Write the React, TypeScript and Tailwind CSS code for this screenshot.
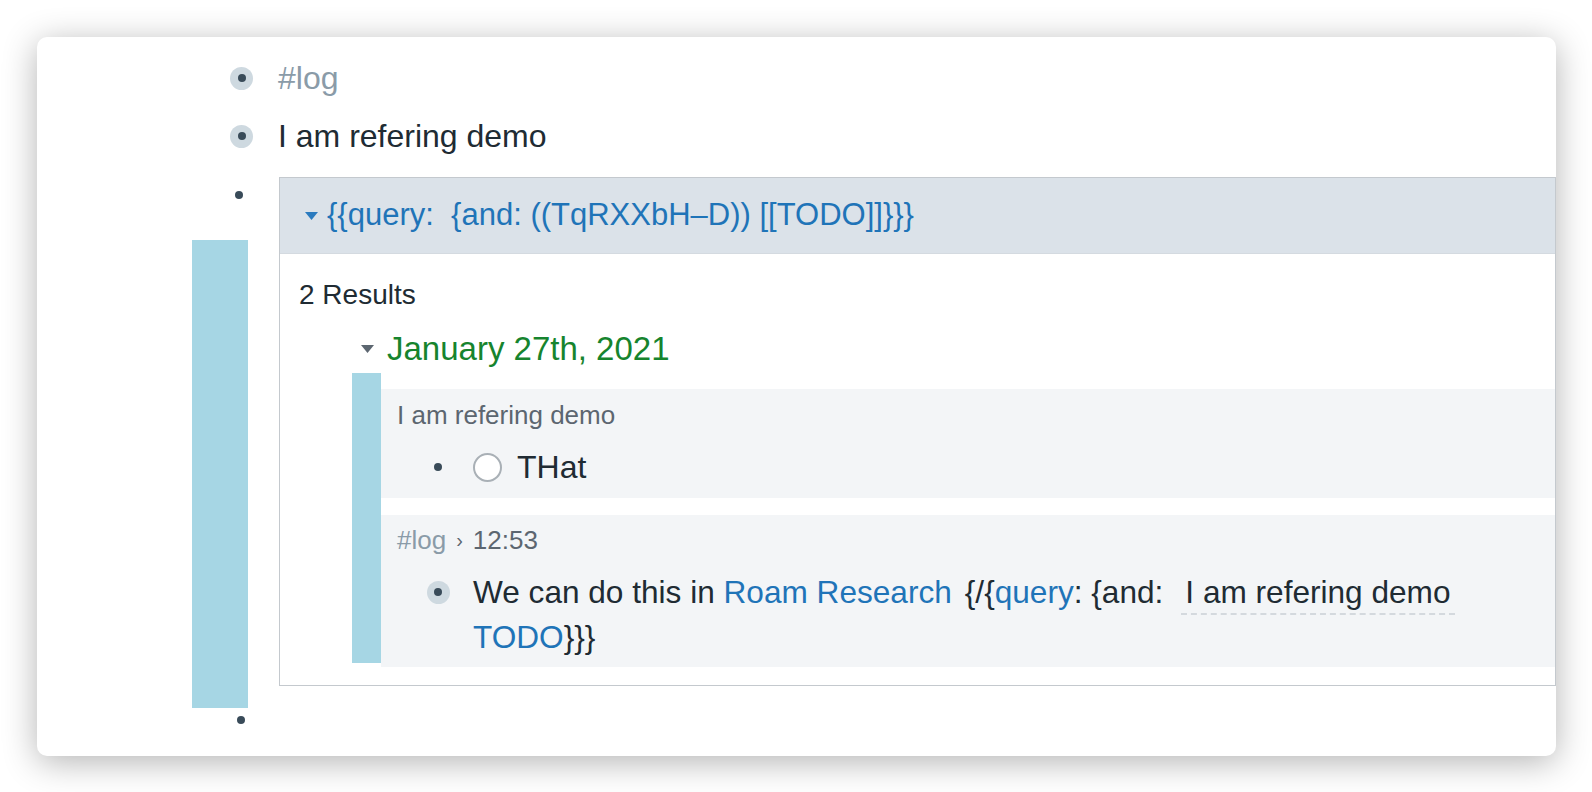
const font = { fontFamily: '"Liberation Sans", Arial, sans-serif' };

function Halo() {
  return (
    <div className="flex h-[23px] w-[23px] items-center justify-center rounded-full bg-[#ced9e0]">
      <div className="h-[8px] w-[8px] rounded-full bg-[#394b59]" />
    </div>
  );
}

function Dot() {
  return <div className="h-[8px] w-[8px] rounded-full bg-[#394b59]" />;
}

function Caret({ color }: { color: string }) {
  return (
    <svg width="13" height="8" viewBox="0 0 13 8" className="shrink-0">
      <path d="M0 0 L13 0 L6.5 8 Z" fill={color} />
    </svg>
  );
}

export default function App() {
  return (
    <div className="h-[792px] w-[1592px] overflow-hidden bg-white pl-[37px] pt-[37px]" style={font}>
      <div className="h-[719px] w-[1519px] overflow-hidden rounded-[10px] bg-white pl-[155px] pt-[12px] shadow-[0_6px_34px_rgba(0,0,0,0.3)]">
        {/* #log */}
        <div className="flex h-[58px] items-center">
          <div className="flex w-[62px] justify-end pr-[1px]">
            <Halo />
          </div>
          <div className="ml-[24px] text-[32px] text-[#8a9ba8]">#log</div>
        </div>

        {/* I am refering demo */}
        <div className="flex h-[58px] items-center">
          <div className="flex w-[62px] justify-end pr-[1px]">
            <Halo />
          </div>
          <div className="ml-[24px] text-[32px] text-[#202b33]">I am refering demo</div>
        </div>

        {/* query block */}
        <div className="mt-[12px] flex items-start">
          <div className="flex w-[62px] flex-col">
            <div className="flex h-[36px] items-center justify-end pr-[9px]">
              <Dot />
            </div>
            <div className="mt-[27px] h-[468px] w-[56px] bg-[#a6d6e4]" />
          </div>

          <div className="ml-[27px] w-[1320px] border border-[#c4c9ce]">
            <div className="flex h-[76px] items-center gap-[9px] border-b border-[#d4dae0] bg-[#dbe2e9] pl-[25px]">
              <Caret color="#2b7bbf" />
              <span className="whitespace-pre text-[31px] text-[#1f74b8]">
                {'{{query:  {and: ((TqRXXbH–D)) [[TODO]]}}}'}
              </span>
            </div>

            <div className="pl-[19px] pt-[22px]">
              <div className="flex h-[36px] items-center pt-[2px] text-[28px] text-[#202b33]">2 Results</div>

              <div className="mt-[17px] flex h-[40px] items-center gap-[13px] pl-[62px]">
                <Caret color="#5c6670" />
                <span className="text-[33px] text-[#16842e]">January 27th, 2021</span>
              </div>

              <div className="mt-[4px] flex pl-[53px] pb-[18px]">
                <div className="h-[290px] w-[29px] shrink-0 bg-[#a6d6e4]" />
                <div className="flex flex-1 flex-col gap-[17px] pt-[16px]">
                  {/* result 1 */}
                  <div className="h-[109px] bg-[#f3f5f7] pl-[16px] pt-[10px]">
                    <div className="flex h-[32px] items-center text-[26px] text-[#5c6670]">I am refering demo</div>
                    <div className="mt-[14px] flex h-[44px] items-center">
                      <div className="flex w-[82px] justify-center pl-[1px]">
                        <Dot />
                      </div>
                      <div className="ml-[-6px] h-[29px] w-[29px] rounded-full border-2 border-[#a9b0b6] bg-white" />
                      <span className="ml-[15px] text-[32px] text-[#202b33]">THat</span>
                    </div>
                  </div>

                  {/* result 2 */}
                  <div className="h-[152px] bg-[#f3f5f7] pl-[16px] pt-[9px]">
                    <div className="flex h-[32px] items-center gap-[10px] text-[26px]">
                      <span className="text-[#8a9ba8]">#log</span>
                      <span className="text-[20px] text-[#5c6670]">›</span>
                      <span className="text-[#5c6670]">12:53</span>
                    </div>
                    <div className="mt-[14px] flex">
                      <div className="flex h-[44px] w-[53px] shrink-0 items-center justify-end">
                        <Halo />
                      </div>
                      <div className="ml-[23px] text-[31.6px] leading-[45px] text-[#202b33]">
                        We can do this in <span className="text-[#1f74b8]">Roam Research</span>
                        <span className="ml-[13px]">{'{/{'}</span>
                        <span className="text-[#1f74b8]">query</span>: {'{and:'}
                        <span className="ml-[18px] inline-block border-b-2 border-dashed border-[#d4d9de] px-[4px] leading-[42px]">
                          I am refering demo
                        </span>
                        <br />
                        <span className="text-[#1f74b8]">TODO</span>
                        {'}}}'}
                      </div>
                    </div>
                  </div>
                </div>
              </div>
            </div>
          </div>
        </div>

        {/* bottom bullet */}
        <div className="flex h-[24px] w-[62px] items-center justify-end pr-[9px]">
          <Dot />
        </div>
      </div>
    </div>
  );
}
